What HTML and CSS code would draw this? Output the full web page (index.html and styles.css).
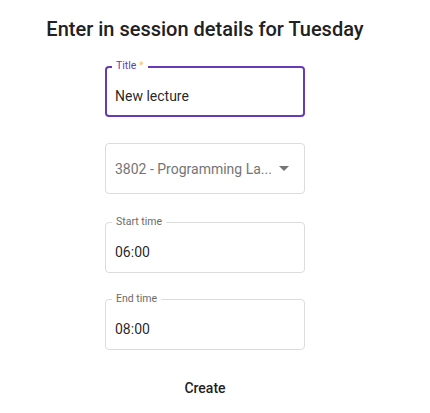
FILE: index.html
```html
<!DOCTYPE html>
<html lang="en">
<head>
<meta charset="utf-8">
<title>Session details</title>
<link rel="stylesheet" href="styles.css">
</head>
<body>
<main class="page">
  <h1 class="heading">Enter in session details for Tuesday</h1>
  <form class="form">
    <div class="field field--focused field--labelled">
      <span class="field-label">Title<span class="req"> *</span></span>
      <span class="field-value">New lecture</span>
    </div>
    <div class="field field--select">
      <span class="field-value field-value--muted">3802 - Programming La...</span>
      <svg class="caret" width="10" height="5" viewBox="0 0 10 5"><path d="M0 0 L10 0 L5 5 Z" fill="#757575"/></svg>
    </div>
    <div class="field field--labelled field--spaced">
      <span class="field-label">Start time</span>
      <span class="field-value">06:00</span>
    </div>
    <div class="field field--labelled">
      <span class="field-label">End time</span>
      <span class="field-value">08:00</span>
    </div>
    <button type="button" class="create">Create</button>
  </form>
</main>
</body>
</html>
```

FILE: styles.css
```css
* { box-sizing: border-box; }
html, body { margin: 0; padding: 0; background: #fff; }
body { font-family: Roboto, "Noto Sans", Arial, sans-serif; color: rgba(0,0,0,0.87); }

.page {
  width: 410px;
  display: flex;
  flex-direction: column;
  align-items: center;
  padding-top: 16px;
}

.heading {
  margin: 0;
  font-size: 20px;
  line-height: 26px;
  font-weight: 500;
  color: #212121;
}

.form {
  margin-top: 24px;
  display: flex;
  flex-direction: column;
  align-items: center;
  gap: 26px;
}

.field {
  position: relative;
  width: 200px;
  height: 51px;
  border: 1px solid #dcdcdc;
  border-radius: 4px;
  display: flex;
  align-items: center;
  padding-left: 9px;
}

.field--spaced { margin-top: 2px; }

.field--labelled { padding-top: 8px; }

.field--focused {
  border: 2px solid #673ab7;
  padding-left: 8px;
}

.field-label {
  position: absolute;
  top: -8px;
  left: 6px;
  padding: 0 4px;
  background: #fff;
  font-size: 10.5px;
  line-height: 14px;
  color: #6b6b6b;
}

.field--focused .field-label {
  top: -9px;
  left: 5px;
  color: #673ab7;
}

.req { color: #f2c94c; }

.field-value {
  font-size: 14px;
  line-height: 20px;
  white-space: nowrap;
  color: rgba(0,0,0,0.87);
}

.field-value--muted { color: #757575; }

.field--select {
  justify-content: space-between;
  padding-right: 15px;
}

.caret { display: block; flex: none; }

.create {
  margin-top: -6px;
  height: 36px;
  padding: 0 16px;
  border: none;
  background: transparent;
  font-family: inherit;
  font-size: 14px;
  font-weight: 500;
  color: #1f1f1f;
  cursor: pointer;
}
```
